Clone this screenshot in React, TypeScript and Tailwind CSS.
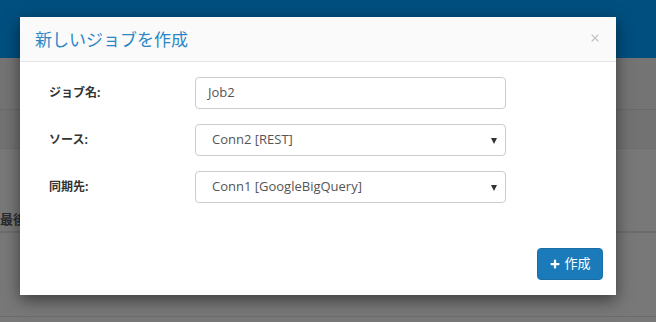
import { Plus, X } from "lucide-react";

const font = { fontFamily: '"Open Sans", "Noto Sans CJK JP", sans-serif' };

const Field = ({ label, value, select }: { label: string; value: string; select?: boolean }) => (
  <div className="flex items-center h-[32px]">
    <div className="w-[146px] text-[12px] font-bold text-[#333]">{label}</div>
    <div className="relative w-[311px] h-[32px] rounded-[4px] border border-[#cccccc] bg-white flex items-center">
      <span className={`text-[13px] text-[#555] ${select ? "pl-[16px]" : "pl-[12px]"}`}>{value}</span>
      {select && (
        <span className="absolute right-[8px] top-[13px] w-0 h-0 border-l-[3.5px] border-r-[3.5px] border-t-[6px] border-l-transparent border-r-transparent border-t-[#333]" />
      )}
    </div>
  </div>
);

const App = () => {
  return (
    <div className="relative w-[656px] h-[322px] overflow-hidden bg-[#787878]" style={font}>
      {/* dimmed page behind the dialog */}
      <div className="h-[58px] bg-[#004f7f]" />
      <div className="h-[52px] border-b border-[#6a6a6a] bg-[#747474]" />
      <div className="h-[39px] border-b border-[#6e6e6e] bg-[#727272]" />
      <div className="h-[84px] border-b-2 border-[#6c6c6c] flex items-end pb-[2px]">
        <span className="text-[13px] font-bold text-[#2b2b2b]">最後の同期</span>
      </div>
      <div className="h-[84px] border-b border-[#6c6c6c]" />

      {/* dialog */}
      <div className="absolute left-[20px] top-[17px] w-[596px] h-[278px] bg-white shadow-[0_5px_15px_rgba(0,0,0,0.5)] flex flex-col">
        <div className="h-[45px] bg-[#fafafa] border-b border-[#e5e5e5] flex items-center justify-between pl-[15px] pr-[15px]">
          <span className="text-[17px] text-[#2a86c6] pt-[2px]">新しいジョブを作成</span>
          <X size={12} strokeWidth={2.5} className="text-[#c4c4c4] mt-[-2px]" />
        </div>
        <div className="flex flex-col gap-[15px] pl-[29px] pt-[15px]">
          <Field label="ジョブ名:" value="Job2" />
          <Field label="ソース:" value="Conn2 [REST]" select />
          <Field label="同期先:" value="Conn1 [GoogleBigQuery]" select />
        </div>
        <div className="flex justify-end pr-[13px] mt-[45px]">
          <button className="w-[66px] h-[32px] rounded-[4px] bg-[#1b7bba] border border-[#1a6ea6] text-white text-[13px] flex items-center justify-center gap-[3px]">
            <Plus size={12} strokeWidth={4.5} />
            <span>作成</span>
          </button>
        </div>
      </div>
    </div>
  );
};

export default App;
